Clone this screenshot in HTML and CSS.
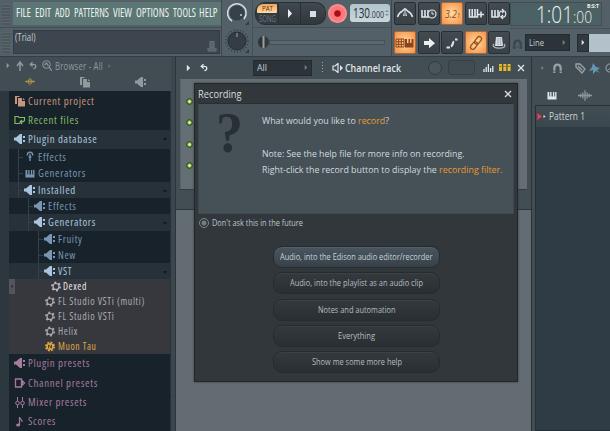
FILE: index.html
```
<!DOCTYPE html>
<html lang="en">
<head>
<meta charset="utf-8">
<title>Recording</title>
<link rel="stylesheet" href="styles.css">
</head>
<body>
<svg class="defs" width="0" height="0">
  <symbol id="plug" viewBox="0 0 12 10"><path fill="currentColor" d="M0 3.500h2L6 0h2v10H6L2 6.500H0zM9 2h2v2H9zM9 6h2v2H9z"/></symbol>
  <symbol id="files" viewBox="0 0 12 12"><path fill="currentColor" d="M1 1h4l1 1H3v7H1zM4 3h4v3h3v5.500H4zM9 3l2 2H9z"/></symbol>
  <symbol id="folder" viewBox="0 0 12 10"><path fill="none" stroke="currentColor" stroke-width="1.200" d="M6 8.500H1V1.500h3l1 1h5.500v2.500c0 1.500-1 2-4 2M8 5 6 7l2 2"/></symbol>
  <symbol id="gear" viewBox="0 0 12 12"><circle cx="6" cy="6" r="3.300" fill="none" stroke="currentColor" stroke-width="1.300"/><circle cx="6" cy="6" r="4.500" fill="none" stroke="currentColor" stroke-width="1.800" stroke-dasharray="2.100 2.612"/></symbol>
  <symbol id="geary" viewBox="0 0 12 12"><circle cx="6" cy="6" r="3.900" fill="currentColor"/><circle cx="6" cy="6" r="4.500" fill="none" stroke="currentColor" stroke-width="1.800" stroke-dasharray="2.100 1.434"/><path d="M4.500 8V4.200l3 3.600V4" fill="none" stroke="#3b3022" stroke-width="1"/></symbol>
  <symbol id="piano" viewBox="0 0 12 10"><path fill="currentColor" d="M1 1h2v5h1V1h1.500v5H7V1h1.500v5h1V1H11v8.500H1z"/></symbol>
  <symbol id="fx" viewBox="0 0 12 12"><path fill="none" stroke="currentColor" stroke-width="1.500" d="M3 5c0-5 6-5 6 0M6 3v8M4.500 6.500h3"/></symbol>
  <symbol id="wave" viewBox="0 0 16 12"><path fill="none" stroke="currentColor" stroke-width="1.500" d="M0 6h16M3 4v4M5.500 2.500v7M8 0v12M10.500 2.500v7M13 4v4"/></symbol>
  <symbol id="tri" viewBox="0 0 6 8"><path fill="currentColor" d="M1 0l4 4-4 4z"/></symbol>
  <symbol id="undo" viewBox="0 0 10 10"><path fill="none" stroke="currentColor" stroke-width="1.600" d="M4.500 .8 1.500 3.500l3 2.700M2 3.500h3.500c4 0 4 5 0 5.500"/></symbol>
  <symbol id="magnet" viewBox="0 0 12 12"><path fill="none" stroke="currentColor" stroke-width="2.400" d="M2.500 11V6c0-5.500 7-5.500 7 0v5"/><path stroke="#444d52" stroke-width=".8" d="M0 8.800h12"/></symbol>
  <symbol id="x" viewBox="0 0 8 8"><path fill="none" stroke="currentColor" stroke-width="1.300" d="M1 1l6 6M7 1 1 7"/></symbol>
</svg>

<div class="app">
  <header class="toolbar">
    <div class="left">
      <div class="grip"></div>
      <nav class="menu">
        <span data-w="15">FILE</span><span data-w="16">EDIT</span><span data-w="15">ADD</span><span data-w="35">PATTERNS</span><span data-w="19">VIEW</span><span data-w="33">OPTIONS</span><span data-w="23">TOOLS</span><span data-w="18.5">HELP</span>
      </nav>
      <div class="grip"></div>
      <div class="hint"><span data-w="20.5">(Trial)</span>
        <svg width="10" height="11" viewBox="0 0 10 11"><path d="M3 0h4v7H3zM1 7v3h8V7" fill="#59636a" stroke="#69727a"/></svg>
      </div>
    </div>
    <div class="knobs">
      <svg width="30" height="28" viewBox="0 0 30 28"><circle cx="15" cy="13" r="7.500" fill="#394148"/><path d="M10 21A9.300 9.300 0 1 1 22 19" fill="none" stroke="#d5dfe3" stroke-width="1.500"/><circle cx="19" cy="15" r="1" fill="#c3cdd2"/><path d="M27 21v4h-4z" fill="#343c42"/></svg>
      <svg width="30" height="28" viewBox="0 0 30 28"><circle cx="15" cy="13" r="11" fill="none" stroke="#343c42" stroke-width="1.500" stroke-dasharray="1 2.200"/><circle cx="15" cy="13" r="9" fill="#343d44" stroke="#252d33"/><path d="M15 5v4" stroke="#98a4aa"/><path d="M27 21v4h-4z" fill="#343c42"/></svg>
    </div>
    <div class="play">
      <div class="transport">
        <div class="mode"><b><span data-w="11">PAT</span></b><i><span data-w="17">SONG</span></i></div>
        <div class="tbtn"><svg width="6" height="9" viewBox="0 0 6 9"><path d="M1 0l4 4.500-4 4.500z" fill="#e9eff2"/></svg></div>
        <div class="tbtn last"><div class="stop"></div></div>
        <div class="rec"></div>
        <div class="tempo"><span data-w="17">130</span><small data-w="14">.000</small><svg width="4" height="8" viewBox="0 0 4 8"><path d="M0 3l2-2 2 2zM0 5l2 2 2-2z" fill="#7e8f97"/></svg></div>
      </div>
      <div class="slider"><div class="thumb"></div><div class="rail"></div></div>
    </div>
    <div class="tools">
      <div class="tool"><svg viewBox="0 0 22 22"><path d="M11 5l2 8H9z" fill="#dce5e8"/><path d="M3.500 14c1-4 3-5 5-6M18.500 14c-1-4-3-5-5-6M8.500 8l2-2h1l2 2" fill="none" stroke="#dce5e8" stroke-width="1.500"/><path d="M11 8v9" stroke="#424b52"/></svg></div>
      <div class="tool"><svg viewBox="0 0 22 22"><path d="M4 7v7h7M7 7v7M10 7v7" stroke="#dce5e8" stroke-width="1.600" fill="none"/><circle cx="14" cy="11" r="4" fill="#414a50" stroke="#dce5e8" stroke-width="1.200"/><path d="M14 8.500V11h2" stroke="#dce5e8" fill="none"/></svg></div>
      <div class="tool on"><em><span data-w="15">3.2<small>1</small></span></em></div>
      <div class="tool"><svg viewBox="0 0 22 22"><path d="M4.500 6v8h8V6M7.200 6v8M10 6v8M4 14h9M13 11.500h6M16 8.500v6" stroke="#dce5e8" stroke-width="1.600" fill="none"/></svg></div>
      <div class="tool"><svg viewBox="0 0 22 22"><path d="M4 7v7h6V7M7 7v7" stroke="#dce5e8" stroke-width="1.600" fill="none"/><path d="M12 14c-2-4 0-7 4-6M17 8c2 4 0 7-4 6M14 6l2 2-2 2M15 12l-2 2 2 2" stroke="#dce5e8" stroke-width="1.200" fill="none"/></svg></div>
      <div class="tool on"><svg viewBox="0 0 22 22"><path d="M2 7h8v8H2zM4.700 7v8M7.300 7v8M2 9.700h8M2 12.300h8" stroke="#8a431b" stroke-width="1" fill="none"/><path d="M11 7h2v4h1.500V7h1.500v4h1.500V7h2v8.500H11z" fill="#8a431b"/></svg></div>
      <div class="tool"><svg viewBox="0 0 22 22"><path d="M6 9h5V6l6 5.200-6 5V13H6z" fill="#eaf0f2"/></svg></div>
      <div class="tool"><svg viewBox="0 0 22 22"><path d="M5.500 15.500H9M10 14.500c2.500-1 1-4 3-5M14 7.500h2.500" stroke="#dce5e8" stroke-width="2.200" fill="none"/></svg></div>
      <div class="tool on"><svg viewBox="0 0 22 22"><g transform="rotate(-52 11 11)" fill="none" stroke="#9a521c" stroke-width="1.300"><rect x="3.500" y="8.700" width="8.500" height="4.600" rx="2.300"/><rect x="10" y="8.700" width="8.500" height="4.600" rx="2.300"/></g></svg></div>
      <div class="tool"><svg viewBox="0 0 22 22"><path d="M8 5h6l1 9H7z" fill="#d6dfe3"/><path d="M6 12c-5 5 15 6 10 0M10 6v7M12.500 6v7" fill="none" stroke="#aab5ba" stroke-width="1.300"/></svg></div>
    </div>
    <div class="right">
      <div class="clock"><span data-w="37">1:01</span><small data-w="19">:00</small><sup data-w="12">B:S:T</sup></div>
      <div class="snap"><svg width="11" height="11" class="dim"><use href="#magnet"/></svg>
        <div class="select"><span data-w="15">Line</span><svg width="4" height="7"><use href="#tri"/></svg></div>
        <div class="sq"><svg width="4" height="7"><use href="#tri"/></svg></div><div class="pattern"></div>
      </div>
    </div>
  </header>

  <main class="work">
    <aside class="browser">
      <div class="bhead">
        <svg width="4" height="7"><use href="#tri"/></svg>
        <svg width="8" height="10" viewBox="0 0 8 10"><path d="M4 10V2M1 5l3-4 3 4" fill="none" stroke="currentColor" stroke-width="1.500"/></svg>
        <svg width="8" height="9"><use href="#undo"/></svg>
        <svg width="10" height="11" viewBox="0 0 10 11"><circle cx="4.500" cy="4.500" r="3.800" fill="none" stroke="currentColor"/><path d="M7 7l3 4M2.500 5l2-2 2 3" fill="none" stroke="currentColor" stroke-width="1.200"/></svg>
        <span data-w="48">Browser - All</span>
        <svg width="3" height="6" class="dimmer"><use href="#tri"/></svg>
      </div>
      <div class="btabs"><svg width="10" height="9" class="gold"><use href="#wave"/></svg><svg width="12" height="12"><use href="#files"/></svg><svg width="12" height="10"><use href="#plug"/></svg></div>
      <div class="tree">
        <div class="row h20 peach"><svg width="11" height="12"><use href="#files"/></svg><span data-w="66.5">Current project</span></div>
        <div class="row h19 green"><svg width="12" height="10"><use href="#folder"/></svg><span data-w="51">Recent files</span></div>
        <div class="row h19 open"><svg width="12" height="10"><use href="#plug"/></svg><span data-w="69.500">Plugin database</span></div>
        <div class="row h16 l1 blue"><svg width="11" height="11"><use href="#fx"/></svg><span data-w="28.500">Effects</span></div>
        <div class="row h17 l1 blue"><svg width="11" height="9"><use href="#piano"/></svg><span data-w="48">Generators</span></div>
        <div class="row h16 l1 open"><svg width="12" height="10"><use href="#plug"/></svg><span data-w="38">Installed</span></div>
        <div class="row h16 l2 blue"><svg width="12" height="10"><use href="#plug"/></svg><span data-w="28.500">Effects</span></div>
        <div class="row h17 l2 open"><svg width="12" height="10"><use href="#plug"/></svg><span data-w="48">Generators</span></div>
        <div class="row h16 l3 blue"><svg width="12" height="10"><use href="#plug"/></svg><span data-w="24.500">Fruity</span></div>
        <div class="row h16 l3 blue"><svg width="12" height="10"><use href="#plug"/></svg><span data-w="18">New</span></div>
        <div class="row h16 l3 open"><svg width="12" height="10"><use href="#plug"/></svg><span data-w="14">VST</span></div>
        <div class="row h15 item cur"><div class="handle"><svg width="3" height="5"><use href="#tri"/></svg></div><svg width="11" height="11"><use href="#gear"/></svg><span data-w="24">Dexed</span></div>
        <div class="row h15 l3 item"><svg width="11" height="11"><use href="#gear"/></svg><span data-w="87">FL Studio VSTi (multi)</span></div>
        <div class="row h15 l3 item"><svg width="11" height="11"><use href="#gear"/></svg><span data-w="56.500">FL Studio VSTi</span></div>
        <div class="row h15 l3 item"><svg width="11" height="11"><use href="#gear"/></svg><span data-w="20">Helix</span></div>
        <div class="row h15 l3 item gold"><svg width="11" height="11"><use href="#geary"/></svg><span data-w="38.500">Muon Tau</span></div>
        <div class="row h19 pink"><svg width="12" height="10"><use href="#plug"/></svg><span data-w="62">Plugin presets</span></div>
        <div class="row h20 pink"><svg width="11" height="10" viewBox="0 0 11 10"><path d="M1 1h6v8H1zM8 3l2 2-2 2z" fill="none" stroke="currentColor" stroke-width="1.300"/></svg><span data-w="70">Channel presets</span></div>
        <div class="row h19 pink"><svg width="11" height="11" viewBox="0 0 11 11"><path d="M3 0v4M3 8v3M8 0v4M8 8v3" stroke="currentColor"/><circle cx="3" cy="6" r="1.800" fill="none" stroke="currentColor"/><circle cx="8" cy="6" r="1.800" fill="none" stroke="currentColor"/></svg><span data-w="59">Mixer presets</span></div>
        <div class="row h19 pink"><svg width="11" height="11" viewBox="0 0 11 11"><path d="M5 9V1c0 2 3 2 2.500 5" fill="none" stroke="currentColor" stroke-width="1.200"/><ellipse cx="3.600" cy="9" rx="2" ry="1.500" fill="currentColor"/></svg><span data-w="28">Scores</span></div>
      </div>
    </aside>
    <div class="split"></div>

    <section class="desk">
      <div class="rack">
        <div class="rhead">
          <svg width="5" height="8"><use href="#tri"/></svg>
          <svg width="8" height="9" class="rundo"><use href="#undo"/></svg>
          <div class="select all"><span data-w="10">All</span><svg width="4" height="7"><use href="#tri"/></svg></div>
          <div class="dots"></div>
          <svg width="11" height="10" viewBox="0 0 11 10" class="spk"><path d="M1 3h2l3-2.500v9L3 7H1z" fill="none" stroke="#dfe6ea" stroke-width="1.200"/><path d="M8 2l3 3-3 3z" fill="#dfe6ea"/></svg>
          <b data-w="56">Channel rack</b>
          <div class="rknob"></div><div class="lcd"></div>
          <svg width="11" height="8" viewBox="0 0 11 8" class="bars"><path d="M1 5v3M3.200 3v5M5.400 0v8M7.600 4v4M9.800 2v6" stroke="#dfe6ea" stroke-width="1.300"/></svg>
          <svg width="12" height="7" viewBox="0 0 12 7" class="steps"><path d="M0 0h3v7H0zM4.300 0h3v7h-3zM8.600 0h3v7h-3z" fill="#e4b92f"/><path d="M0 2.500h12" stroke="#7d682c" stroke-width=".7"/></svg>
          <svg width="8" height="8"><use href="#x"/></svg>
        </div>
        <div class="rbody"><i></i><i></i><i></i><i></i></div>
        <div class="rfoot"></div>
      </div>

      <div class="dialog">
        <div class="title"><span data-w="43.500">Recording</span><svg width="8" height="8"><use href="#x"/></svg></div>
        <div class="message">
          <div class="q"><span data-w="27">?</span></div>
          <div class="copy">
            <p><span data-w="127">What would you like to <a>record</a>?</span></p>
            <p class="gap"><span data-w="202.500">Note: See the help file for more info on recording.</span></p>
            <p><span data-w="240.500">Right-click the record button to display the <a>recording filter.</a></span></p>
          </div>
        </div>
        <div class="ask"><div class="radio"></div><span data-w="91">Don't ask this in the future</span></div>
        <div class="choices">
          <div class="choice hot"><span data-w="152.500">Audio, into the Edison audio editor/recorder</span></div>
          <div class="choice"><span data-w="133">Audio, into the playlist as an audio clip</span></div>
          <div class="choice"><span data-w="77.500">Notes and automation</span></div>
          <div class="choice"><span data-w="37">Everything</span></div>
          <div class="choice"><span data-w="90">Show me some more help</span></div>
        </div>
      </div>
    </section>

    <aside class="playlist">
      <div class="phead"><svg width="3" height="6"><use href="#tri"/></svg><svg width="11" height="11" class="pmag"><use href="#magnet"/></svg>
        <svg width="11" height="11" viewBox="0 0 11 11"><path d="M1 1l4 0 5 5-3 4-6-6zM3 3l4 4" fill="none" stroke="#9aa4a9" stroke-width="1.300"/></svg>
        <svg width="12" height="11" viewBox="0 0 12 11" class="brush"><path d="M4 0l3 4 4 1-3 2 3 3-4-2-3 3V7L0 8l3-4z" fill="#6595b0"/></svg>
        <svg width="10" height="10" viewBox="0 0 10 10"><circle cx="5" cy="5" r="4" fill="none" stroke="#8b959b" stroke-width="1.200"/><path d="M2 8l6-6" stroke="#8b959b"/></svg></div>
      <div class="ptabs"><svg width="12" height="9"><use href="#piano"/></svg><svg width="14" height="11" class="pw"><use href="#wave"/></svg></div>
      <div class="picker"><div class="pat"><svg width="9" height="9" viewBox="0 0 9 9"><path d="M0 0l5.500 4.500L0 9z" fill="#d94560" stroke="#20272c" stroke-width=".5"/><path d="M6.500 3l2 1.500-2 1.500z" fill="#e6edf0"/></svg><span data-w="36">Pattern 1</span></div></div>
    </aside>
  </main>
</div>
<script src="fit.js"></script>
</body>
</html>
```
FILE: styles.css
```
* { box-sizing: border-box; }
body { margin: 0; font-family: "Open Sans", "Noto Sans", sans-serif; font-size: 10px; color: #c8d1d6; overflow: hidden; }
svg { display: block; flex: none; }
.defs { position: absolute; }
[data-w] { display: inline-block; white-space: pre; transform-origin: 0 50%; flex: none; }
.app { width: 610px; height: 431px; background: #626b71; overflow: hidden; display: flex; flex-direction: column; }

.toolbar { height: 57px; display: flex; background: #536067; border-bottom: 1px solid #343d43; overflow: hidden; }
.left { width: 222px; flex: none; display: grid; grid-template: 28px 28px / 13px 1fr; border-right: 1px solid #3e484e; background: linear-gradient(#536067 27px, #424d53 27px, #424d53 28px, #536067 28px); }
.grip { margin: 4px 3px 3px 2px; background: repeating-linear-gradient(#5c676d 0 1px, #4c575d 1px 3px); }
.menu { margin: 2px 0 3px; padding: 0 3px; display: flex; justify-content: space-between; align-items: center; background: #5c7673; color: #e9f1f0; font-size: 12px; font-stretch: 75%; line-height: 22px; }
.menu span { margin-top: -1px; }
.hint { margin: 2px 1px 2px 0; background: #3d464e; border: 1px solid #343c43; display: flex; justify-content: space-between; padding: 0 2px 0 1px; line-height: 13px; color: #c3cdd2; }
.hint svg { margin-top: 10px; }
.knobs { width: 31px; flex: none; border-right: 1px solid #465057; }
.play { width: 139px; flex: none; border-right: 1px solid #3e484e; }
.transport { height: 28px; padding: 2px 0 0 2px; display: flex; border-bottom: 1px solid #465157; }
.mode { width: 24px; height: 23px; background: #333a40; border: 1px solid #293035; border-radius: 10px 0 0 10px; padding: 1px; font-size: 7.500px; line-height: 9px; }
.mode b, .mode i { display: flex; justify-content: center; height: 9px; font-style: normal; font-weight: 400; }
.mode b { background: linear-gradient(#f3a25a, #ffdda4); color: #4c2e17; border-radius: 6px 1px 1px 1px; }
.mode i { color: #6c757b; line-height: 10px; height: 10px; margin-top: 1px; font-size: 9px; }
.tbtn { width: 22px; height: 23px; background: linear-gradient(#41494f, #30383e); border: 1px solid #293035; border-left: 0; display: flex; align-items: center; justify-content: center; }
.last { width: 25px; border-radius: 0 10px 10px 0; }
.stop { width: 6px; height: 6px; background: #d6dfe3; }
.rec { width: 19px; height: 19px; margin: 2px 0 0 2px; border-radius: 50%; flex: none; background: radial-gradient(circle, #a90e18 0 2.800px, #ff777a 3.800px 7px, #fb9a96 9px); }
.tempo { width: 40px; height: 18px; margin: 2px 0 0 3px; flex: none; background: linear-gradient(#b0c4cb, #c9d7db); border-radius: 3px; color: #273036; display: flex; align-items: center; padding-left: 3px; font-size: 14px; line-height: 18px; }
.tempo small { font-size: 9.5px; padding-top: 3px; }
.tempo svg { margin-left: 1px; }
.slider { height: 28px; display: flex; align-items: center; padding-left: 5px; }
.thumb { width: 11px; height: 12px; border-radius: 50%; background: linear-gradient(90deg, #2d3439 4px, #97a0a3 5px 6px, #34393c 7px); }
.rail { width: 116px; height: 5px; border: 1px solid #465157; background: #5b676d; }

.tools { width: 118px; flex: none; padding: 2px 0 0 2px; display: grid; grid-template-columns: repeat(5, 22px); column-gap: 1.500px; row-gap: 6px; align-content: start; }
.tool { height: 23px; background: linear-gradient(#434b51, #394147); border: 1px solid #282f34; border-radius: 2px; overflow: hidden; display: flex; align-items: center; justify-content: center; }
.tool svg { width: 22px; height: 22px; }
.on { background: radial-gradient(#ffdda2, #f79b50 85%); border-color: #b26437; }
.on em { color: #8c4a1d; font-size: 11px; }
.on small { font-size: 7px; }
.right { flex: 1; min-width: 0; }
.clock { position: relative; width: 92px; height: 24px; margin-top: 2px; margin-bottom: 2px; background: #4c6163; border: 1px solid #3f5053; color: #f0f5f5; display: flex; padding-left: 25px; font-size: 24px; font-weight: 300; line-height: 22px; }
.clock small { height: 14px; margin-top: 7px; font-size: 17px; line-height: 14px; }
.clock sup { position: absolute; top: 1px; left: 76px; font-size: 5px; font-weight: 700; line-height: 5px; }
.snap { height: 28px; display: flex; align-items: center; border-top: 1px solid #465157; }
.dim { color: #3c464c; margin: 3px 2px 0 2px; }
.select { width: 45px; height: 17px; background: #2c3339; border: 1px solid #242b30; display: flex; align-items: center; justify-content: space-between; padding: 0 3px; color: #c4cdd1; font-size: 9.500px; line-height: 15px; }
.select svg { color: #707b81; }
.sq { width: 12px; height: 18px; margin-left: 7px; background: #323a40; border: 1px solid #262d32; display: flex; align-items: center; justify-content: center; color: #e2e9ec; }
.pattern { flex: 1; height: 18px; background: #b2c1ca; }

.work { flex: 1; display: flex; min-height: 0; }
.browser { width: 171px; flex: none; background: #424d53; color: #8f999e; }
.bhead { height: 17px; padding: 0 0 0 6px; display: flex; align-items: center; gap: 6px; font-size: 10px; line-height: 16px; }
.bhead svg:nth-child(n+3) { margin-left: -1px; }
.bhead span { margin-left: -3px; letter-spacing: .3px; }
.dimmer { color: #66727a; }
.btabs { height: 17px; display: flex; align-items: center; justify-content: space-between; padding: 0 24px 2px 25px; }
.gold { color: #e2a94a; }
.btabs .gold { color: #ad914d; }
.tree { height: 340px; border-left: 9px solid #2c373e; background: #17222a; border-right: 1px solid #283138; overflow: hidden; }
.row { position: relative; display: flex; align-items: center; padding-left: 5px; padding-bottom: 1px; gap: 1.500px; font-size: 11.500px; font-stretch: 75%; letter-spacing: .7px; line-height: 15px; }
.row > svg { width: 12px; }
.row > span { margin-top: -1px; }
.h20 { height: 20px; } .h19 { height: 19px; } .h17 { height: 17px; } .h16 { height: 16px; } .h15 { height: 15px; }
.l1 { padding-left: 15px; } .l2 { padding-left: 25px; } .l3 { padding-left: 35px; }
.l1::before, .l2::before, .l3::before { content: ""; position: absolute; top: 0; bottom: 0; width: 4px; border-left: 1px solid #34414a; background: linear-gradient(#34414a, #34414a) 0 50% / 4px 1px no-repeat; }
.l1::before { left: 9px; } .l2::before { left: 19px; } .l3::before { left: 29px; }
.item::before { display: none; }
.peach { color: #c5957f; } .green { color: #85ba68; } .blue { color: #7895b2; } .pink { color: #a57b9f; }
.open { color: #a9c5df; background: #273139; }
.open::after { content: ""; position: absolute; right: 3px; top: 8px; border: 2px solid transparent; border-top: 3px solid #11191e; }
.item { color: #a9abb0; background: #37373e; font-size: 11px; }
.item.gold { color: #dfa844; }
.cur { color: #e5e7ea; padding-left: 0; }
.cur > svg { margin-left: 33px; color: #b7babe; }
.handle { width: 6px; height: 15px; background: #55565b; color: #292a2f; display: flex; align-items: center; justify-content: center; }
.split { width: 5px; flex: none; background: radial-gradient(circle, #252e34 0 .6px, transparent 1px) 1px 338px / 3px 3px no-repeat, #3b464d; border-right: 1px solid #2b353b; }

.desk { position: relative; width: 355px; flex: none; background: #636c72; }
.rack { height: 153px; background: #434d54; border-bottom: 1px solid #2d363c; padding: 0 4px; display: flex; flex-direction: column; }
.rhead { height: 22px; padding-bottom: 1px; display: flex; align-items: center; color: #e0e7ea; padding-left: 6px; }
.rundo { margin-left: 9px; }
.all { width: 59px; height: 16px; margin-left: 45px; }
.dots { width: 1px; height: 12px; margin-left: 10px; background: repeating-linear-gradient(#9aa4a9 0 1px, transparent 1px 3px); }
.spk { margin: 0 2px 0 9px; }
.rhead b { font-size: 10.500px; font-weight: 600; line-height: 16px; }
.rknob { width: 14px; height: 14px; margin-left: 27px; border-radius: 50%; background: #4a545a; border: 1px solid #323b41; }
.lcd { width: 27px; height: 15px; margin-left: 6px; border-radius: 3px; border: 1px solid #363f45; background: #424b51; }
.bars { margin-left: 8px; } .steps { margin: 0 6px 0 5px; }
.rbody { height: 110px; background: #646e74; border-left: 1px solid #59636a; display: flex; flex-direction: column; padding: 19px 0 0 5px; gap: 14.300px; }
.rbody i { width: 7px; height: 7px; border-radius: 50%; background: #d9f1a8; border: 2px solid #66963c; outline: 1px solid #34432f; outline-offset: -1px; flex: none; }
.rfoot { height: 20px; border-top: 1px solid #343d43; }

.dialog { position: absolute; left: 18px; top: 26px; width: 324px; height: 299px; border: 1px solid #21282c; background: #31373b; padding: 0 3px; box-shadow: 0 0 2px #343c42; display: flex; flex-direction: column; }
.title { height: 19px; flex: none; display: flex; align-items: center; justify-content: space-between; padding: 0 2px 0 0; color: #d7dde0; line-height: 18px; font-size: 10px; }
.message { height: 111px; flex: none; background: #465057; border: 1px solid #3e484e; border-top-color: #283035; display: flex; }
.q { width: 63px; padding: 9px 0 0 17px; color: #293035; font: 700 57px/40px "Liberation Serif", serif; }
.copy { padding-top: 9px; font-size: 9.800px; color: #d1dadf; }
p { margin: 0; height: 16.500px; line-height: 16px; white-space: nowrap; }
.gap { margin-top: 16px; }
a { color: #e79b32; }
.ask { height: 18px; display: flex; align-items: center; gap: 3px; padding-left: 1px; font-size: 9.500px; line-height: 18px; color: #bdc6cb; }
.radio { width: 10px; height: 10px; border: 1px solid #7e878c; border-radius: 50%; background: radial-gradient(#747d82 0 2px, #31373b 3px); }
.choices { margin: 14px 0 0 75px; display: flex; flex-direction: column; gap: 4.300px; }
.choice { width: 167px; height: 22px; border: 1px solid #252b2f; border-radius: 9px; background: linear-gradient(#33393d, #292f33); box-shadow: inset 0 1px #3b4246; display: flex; justify-content: center; line-height: 20px; font-size: 9.500px; color: #b4bdc2; }
.hot { background: linear-gradient(#4a565f, #36414a); box-shadow: inset 0 1px #53606a; color: #c8d2d8; }

.playlist { flex: 1; min-width: 0; background: #424d53; border-left: 1px solid #2a3339; padding-left: 3px; }
.phead { height: 22px; display: flex; align-items: center; padding-left: 6px; color: #7d888e; overflow: hidden; }
.pmag { margin: 0 12px 0 8px; color: #96a0a5; }
.phead .brush { margin: 0 4px 0 3px; }
.ptabs { height: 26px; display: flex; align-items: center; gap: 20px; padding: 6px 0 0 11px; color: #e1e8eb; }
.pw { color: #8c979d; }
.picker { height: 326px; border: 1px solid #263037; border-right: 0; background: #303c45; }
.pat { height: 21px; background: linear-gradient(#424d53, #3b474e); display: flex; align-items: center; gap: 3px; padding: 0 0 1px 1px; font-size: 10.500px; line-height: 20px; color: #c9d3d8; }
```
FILE: fit.js
```
// Condense each label to the width given in data-w, keeping its layout box in step.
document.querySelectorAll('[data-w]').forEach(function (el) {
  var target = parseFloat(el.dataset.w);
  var natural = el.getBoundingClientRect().width;
  el.style.transform = 'scaleX(' + target / natural + ')';
  el.style.marginRight = (target - natural) + 'px';
});
```
